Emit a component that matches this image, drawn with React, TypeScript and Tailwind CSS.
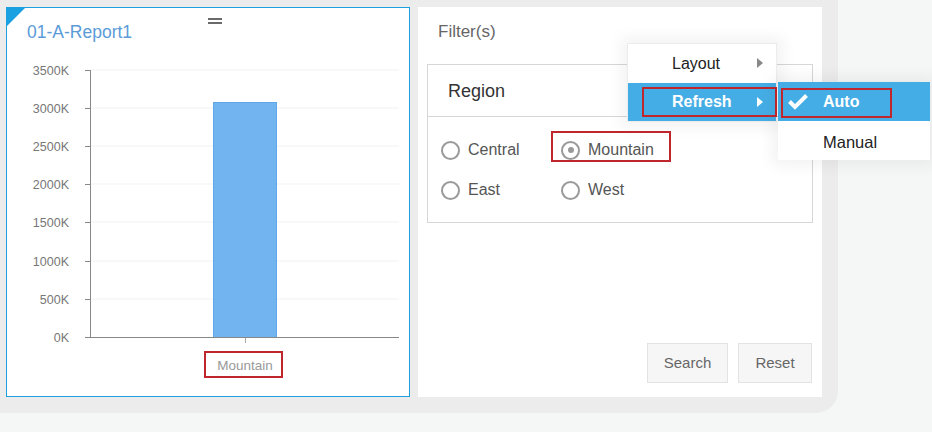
import React from "react";

const ticks = [
  { v: "3500K", y: 70 },
  { v: "3000K", y: 108 },
  { v: "2500K", y: 146 },
  { v: "2000K", y: 184 },
  { v: "1500K", y: 222 },
  { v: "1000K", y: 261 },
  { v: "500K", y: 299 },
  { v: "0K", y: 337 },
];

function Radio({ label, checked, boxed }: { label: string; checked?: boolean; boxed?: boolean }) {
  return (
    <div className="relative flex h-[20px] w-[120px] items-center">
      <span className="flex h-[19px] w-[19px] items-center justify-center rounded-full border-[2.5px] border-[#9a9a9a]">
        {checked && <span className="h-[6px] w-[6px] rounded-full bg-[#999]" />}
      </span>
      <span className="ml-[8px] text-[16px] text-[#555]">{label}</span>
      {boxed && (
        <span className="absolute left-[-10px] top-[-9px] h-[31px] w-[120px] border-2 border-[#c0272d]" />
      )}
    </div>
  );
}

export default function App() {
  return (
    <div
      className="relative h-[432px] w-[932px] overflow-hidden bg-[#f5f6f6]"
      style={{ fontFamily: '"Liberation Sans", Arial, sans-serif' }}
    >
      <div className="flex h-[413px] w-[838px] gap-[8px] rounded-br-[22px] bg-[#ececec] pl-[6px] pt-[7px]">
        {/* Left panel */}
        <div className="relative h-[390px] w-[404px] border border-[#1ba1e2] bg-white">
          <div className="absolute left-0 top-0 h-0 w-0 border-r-[18px] border-t-[18px] border-r-transparent border-t-[#1ba1e2]" />
          <div className="absolute left-[201px] top-[10px] flex flex-col gap-[2px]">
            <span className="h-[2px] w-[14px] bg-[#6a6a6a]" />
            <span className="h-[2px] w-[14px] bg-[#6a6a6a]" />
          </div>
          <div className="pl-[20px] pt-[14px] text-[17.5px] leading-[21px] text-[#5a9bd8]">01-A-Report1</div>
          <svg width="402" height="352" viewBox="7 43 402 352" className="block">
            {ticks.map((t) => (
              <g key={t.v}>
                {t.y !== 337 && <line x1="91" x2="399" y1={t.y} y2={t.y} stroke="#f1f1f1" strokeWidth="1" />}
                <line x1="85" x2="91" y1={t.y + 0.5} y2={t.y + 0.5} stroke="#888" strokeWidth="1" />
                <text x="69" y={t.y + 4.5} textAnchor="end" fontSize="12.5" fill="#777">
                  {t.v}
                </text>
              </g>
            ))}
            <rect x="213.5" y="102.5" width="63" height="235" fill="#72b4ef" stroke="#5ea8ea" strokeWidth="1" />
            <line x1="90.5" x2="90.5" y1="70" y2="338" stroke="#888" strokeWidth="1" />
            <line x1="85" x2="399" y1="337.5" y2="337.5" stroke="#888" strokeWidth="1" />
            <line x1="245.5" x2="245.5" y1="338" y2="343" stroke="#aaa" strokeWidth="1" />
            <text x="245" y="370" textAnchor="middle" fontSize="13.5" fill="#999">
              Mountain
            </text>
            <rect x="205" y="352" width="77" height="25" fill="none" stroke="#c0272d" strokeWidth="2" />
          </svg>
        </div>

        {/* Right panel */}
        <div className="flex h-[390px] w-[404px] flex-col bg-white">
          <div className="pl-[20px] pt-[15px] text-[17px] leading-[20px] text-[#666]">Filter(s)</div>
          <div className="mx-[9px] mt-[22px] h-[159px] border border-[#d6d6d6]">
            <div className="flex h-[52px] items-center border-b border-[#d6d6d6] pl-[20px] pt-[2px] text-[18px] text-[#333]">
              Region
            </div>
            <div className="flex flex-col gap-[20px] pl-[13px] pt-[23px]">
              <div className="flex">
                <Radio label="Central" />
                <Radio label="Mountain" checked boxed />
              </div>
              <div className="flex">
                <Radio label="East" />
                <Radio label="West" />
              </div>
            </div>
          </div>
          <div className="mt-auto flex justify-end gap-[10px] pb-[14px] pr-[10px]">
            <button className="h-[40px] w-[81px] border border-[#e3e3e3] bg-[#f6f6f6] text-[15px] text-[#666]">Search</button>
            <button className="h-[40px] w-[74px] border border-[#e3e3e3] bg-[#f6f6f6] text-[15px] text-[#666]">Reset</button>
          </div>
        </div>
      </div>

      {/* Context menu */}
      <div className="absolute left-[627px] top-[43px] w-[150px] border border-[#ececec] bg-white shadow-[0_0_14px_6px_rgba(0,0,0,0.05)]">
        <div className="relative flex h-[39px] items-center pl-[44px] text-[16px] text-[#222]">
          Layout
          <span className="absolute right-[13px] top-[14px] h-0 w-0 border-y-[5px] border-l-[6px] border-y-transparent border-l-[#888]" />
        </div>
        <div className="relative flex h-[38px] items-center bg-[#45ade5] pl-[44px] text-[16px] font-bold text-white">
          Refresh
          <span className="absolute right-[13px] top-[14px] h-0 w-0 border-y-[5px] border-l-[6px] border-y-transparent border-l-white" />
          <span className="absolute left-[14px] top-[4px] h-[30px] w-[135px] border-2 border-[#c0272d]" />
        </div>
      </div>
      <div className="absolute left-[778px] top-[82px] w-[152px] bg-white shadow-[0_0_14px_6px_rgba(0,0,0,0.05)]">
        <div className="relative flex h-[39px] items-center bg-[#45ade5] pl-[45px] text-[16px] font-bold text-white">
          <svg className="absolute left-[10px] top-[11px]" width="20" height="17" viewBox="0 0 20 17">
            <path d="M1.5 8.5 L7 14 L18.5 2.5" fill="none" stroke="white" strokeWidth="4" strokeLinejoin="miter" />
          </svg>
          Auto
          <span className="absolute left-[3px] top-[6px] h-[30px] w-[111px] border-2 border-[#c0272d]" />
        </div>
        <div className="flex h-[39px] items-center pl-[45px] pt-[3px] text-[16.5px] text-[#222]">Manual</div>
      </div>
    </div>
  );
}
